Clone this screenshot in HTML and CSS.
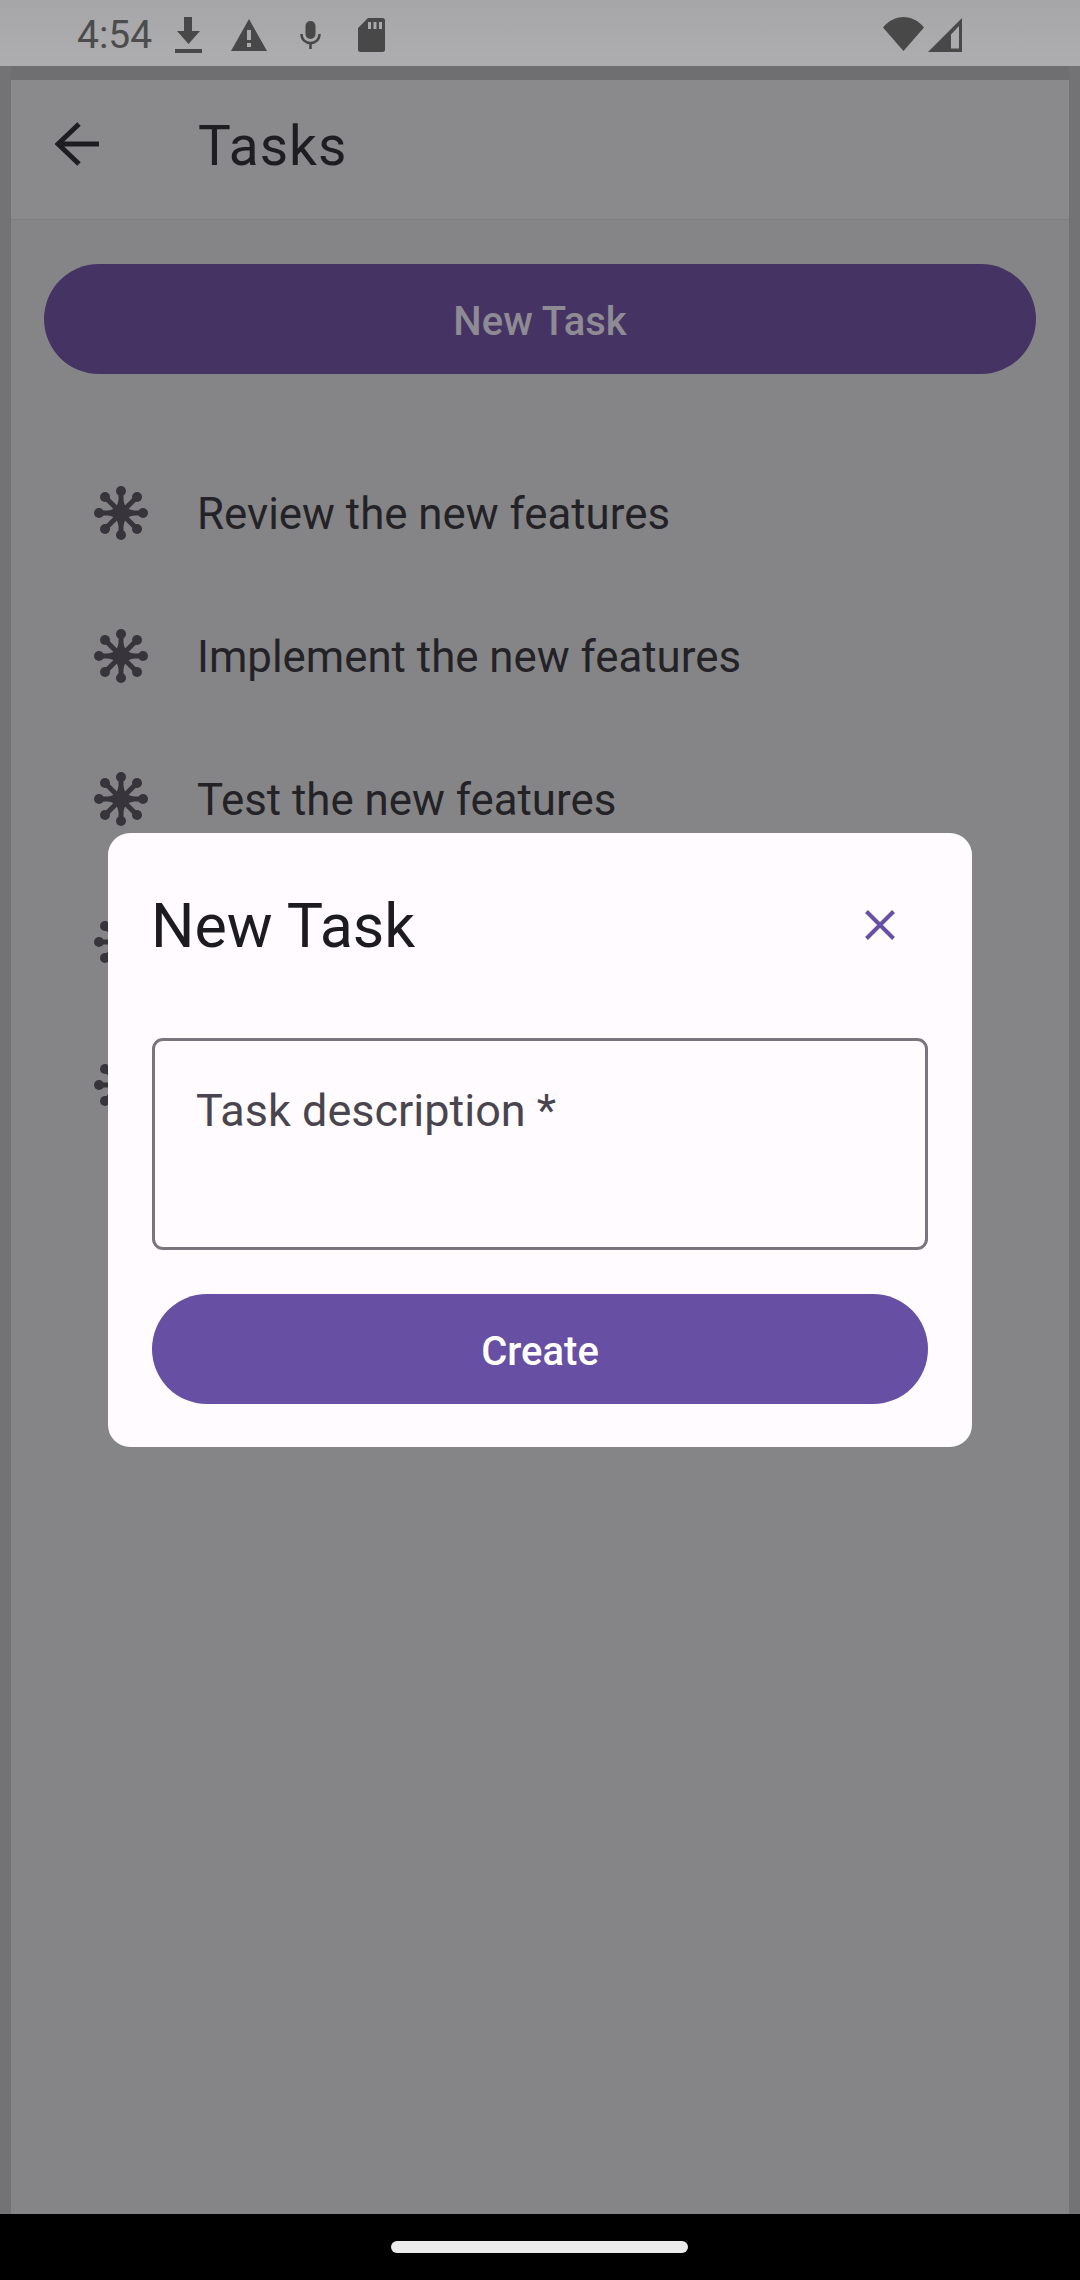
FILE: index.html
```html
<!DOCTYPE html>
<html lang="en">
<head>
    <meta charset="UTF-8">
    <meta name="viewport" content="width=device-width, initial-scale=1.0">
    <title>Tasks</title>
    <link rel="stylesheet" href="styles.css">
</head>
<body>
    <svg class="defs" width="0" height="0">
        <symbol id="star" viewBox="0 0 54 54">
            <path d="M27 5V49M5 27H49M11 11L43 43M43 11L11 43" fill="none" stroke="#37343c" stroke-width="5"/>
            <g fill="#37343c">
                <path d="M27 8L32 22L45 9L32 22L46 27L32 32L45 45L32 32L27 46L22 32L9 45L22 32L8 27L22 22L9 9L22 22Z"/>
                <circle cx="27" cy="5" r="5"/><circle cx="27" cy="49" r="5"/>
                <circle cx="5" cy="27" r="5"/><circle cx="49" cy="27" r="5"/>
                <circle cx="11" cy="11" r="5"/><circle cx="43" cy="11" r="5"/>
                <circle cx="11" cy="43" r="5"/><circle cx="43" cy="43" r="5"/>
            </g>
        </symbol>
    </svg>

    <div class="status-bar">
        <span class="time">4:54</span>
        <svg class="st-download" width="27" height="36" viewBox="0 0 27 36"><path d="M9 0H17V14H25L13.500 27L2 14H9Z" fill="#484848"/><rect y="32" width="27" height="4" fill="#484848"/></svg>
        <svg class="st-warn" width="36" height="32" viewBox="0 0 36 32"><path fill-rule="evenodd" d="M18 0L36 32H0ZM16 11V21H20V11ZM16 24V28H20V24Z" fill="#484848"/></svg>
        <svg class="st-mic" width="21" height="28" viewBox="0 0 21 28"><rect x="5.500" y="0" width="10" height="18" rx="5" fill="#484848"/><path d="M1.500 13C1.500 18.500 5.500 22 10.500 22S19.500 18.500 19.500 13" fill="none" stroke="#484848" stroke-width="2.500"/><rect x="9.200" y="21" width="2.600" height="7" fill="#484848"/></svg>
        <svg class="st-sd" width="27" height="34" viewBox="0 0 27 34"><path fill-rule="evenodd" d="M10 0H24.500Q27 0 27 2.500V31.500Q27 34 24.500 34H2.500Q0 34 0 31.500V10ZM10 4V11H13V4ZM15.500 4V11H18.500V4ZM21 4V11H24V4Z" fill="#484848"/></svg>
        <span class="spacer"></span>
        <svg class="st-wifi" width="41" height="34" viewBox="0 0 41 34"><path d="M0 10.500C11 -3.500 30 -3.500 41 10.500L20.500 34Z" fill="#484848"/></svg>
        <svg class="st-signal" width="34" height="34" viewBox="0 0 34 34"><path fill-rule="evenodd" d="M34 0V34H0ZM31 8L23 16.500V30.500H31Z" fill="#484848"/></svg>
    </div>

    <div class="frame">
        <div class="app-bar">
            <svg class="back" width="44" height="44" viewBox="0 0 44 44"><path d="M44 22H4M24 2L3 22L24 42" fill="none" stroke="#1e1d21" stroke-width="5"/></svg>
            <span class="app-title">Tasks</span>
        </div>
        <div class="content">
            <div class="new-btn">New Task</div>
            <ul class="task-list">
                <li class="task"><svg class="star"><use href="#star"/></svg><span>Review the new features</span></li>
                <li class="task"><svg class="star"><use href="#star"/></svg><span>Implement the new features</span></li>
                <li class="task"><svg class="star"><use href="#star"/></svg><span>Test the new features</span></li>
                <li class="task"><svg class="star"><use href="#star"/></svg></li>
                <li class="task"><svg class="star"><use href="#star"/></svg></li>
            </ul>
        </div>
    </div>

    <div class="nav-bar"><div class="nav-pill"></div></div>

    <div class="dialog">
        <div class="dialog-head">
            <span class="dialog-title">New Task</span>
            <svg class="close" width="30" height="30" viewBox="0 0 30 30"><path d="M1.500 1.500L28.500 28.500M28.500 1.500L1.500 28.500" fill="none" stroke="#674fa3" stroke-width="4"/></svg>
        </div>
        <div class="field"><span class="field-label">Task description *</span></div>
        <div class="create-btn">Create</div>
    </div>
</body>
</html>
```

FILE: styles.css
```css
html, body {
    margin: 0;
    padding: 0;
}
body {
    width: 1080px;
    height: 2280px;
    display: flex;
    flex-direction: column;
    position: relative;
    overflow: hidden;
    font-family: Roboto, sans-serif;
    background: #737375;
}
.defs {
    position: absolute;
}
.status-bar {
    height: 66px;
    flex: none;
    display: flex;
    align-items: flex-start;
    padding: 0 118px 0 77px;
    box-sizing: border-box;
    background: linear-gradient(#a6a6a8, #aeaeb0);
}
.time {
    font-size: 39px;
    line-height: 39px;
    margin-top: 16px;
    width: 98px;
    color: #4c4c4c;
}
.status-bar svg {
    flex: none;
}
.st-download { margin-top: 17px; }
.st-warn { margin: 19px 0 0 29px; }
.st-mic { margin: 21px 0 0 33px; }
.st-sd { margin: 18px 0 0 37px; }
.st-wifi { margin-top: 17px; }
.st-signal { margin: 18px 0 0 4px; }
.spacer {
    flex: 1;
}
.frame {
    flex: 1;
    display: flex;
    flex-direction: column;
    margin: 14px 11px 0;
    background: #858587;
    box-shadow: 0 -14px 0 #6f6f71;
}
.app-bar {
    height: 140px;
    flex: none;
    display: flex;
    align-items: center;
    box-sizing: border-box;
    background: #8a8a8c;
    border-bottom: 1px solid #7e7e80;
}
.back {
    margin: 0 0 12px 44px;
}
.app-title {
    margin: 0 0 7px 99px;
    font-size: 55px;
    line-height: 60px;
    color: #1e1d21;
    letter-spacing: 1px;
}
.content {
    padding: 44px 33px 0;
}
.new-btn {
    height: 110px;
    padding-top: 4px;
    box-sizing: border-box;
    border-radius: 55px;
    background: #453463;
    color: #8f8b95;
    display: flex;
    align-items: center;
    justify-content: center;
    font-size: 40px;
    font-weight: 500;
}
.task-list {
    list-style: none;
    margin: 0;
    padding: 0;
}
.task {
    height: 143px;
    display: flex;
    align-items: center;
    color: #232226;
    font-size: 43.8px;
}
.task:first-child {
    margin-top: 67px;
}
.star {
    width: 54px;
    height: 54px;
    margin-left: 50px;
    flex: none;
}
.task span {
    margin-left: 49px;
    padding-top: 3px;
}
.nav-bar {
    height: 66px;
    flex: none;
    background: #000;
    display: flex;
    justify-content: center;
    padding: 27px 2px 0 0;
    box-sizing: border-box;
    position: relative;
}
.nav-pill {
    width: 297px;
    height: 12px;
    border-radius: 6px;
    background: #ebebeb;
}
.dialog {
    position: absolute;
    left: 108px;
    top: 833px;
    width: 864px;
    height: 614px;
    box-sizing: border-box;
    padding: 0 44px;
    background: #fffbfe;
    border-radius: 22px;
}
.dialog-head {
    height: 205px;
    display: flex;
    align-items: center;
    justify-content: space-between;
    padding-right: 33px;
}
.dialog-title {
    font-size: 61px;
    color: #1c1b1f;
    margin: 0 0 19px -1px;
}
.close {
    margin-bottom: 21px;
}
.field {
    height: 212px;
    box-sizing: border-box;
    border: 3px solid #79747e;
    border-radius: 11px;
    padding: 44px 0 0 41px;
}
.field-label {
    font-size: 45px;
    line-height: 52px;
    color: #49454f;
    display: block;
}
.create-btn {
    height: 110px;
    padding-top: 4px;
    box-sizing: border-box;
    margin-top: 44px;
    border-radius: 55px;
    background: #674fa3;
    color: #fff;
    display: flex;
    align-items: center;
    justify-content: center;
    font-size: 40px;
    font-weight: 500;
}
```
